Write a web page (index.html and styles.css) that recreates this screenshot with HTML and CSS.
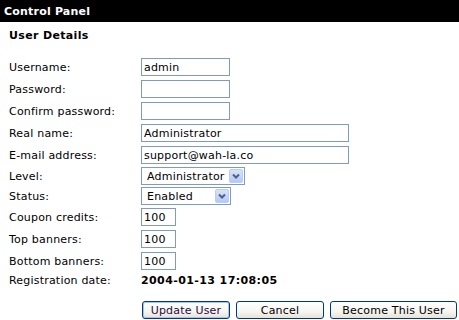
FILE: index.html
```html
<!DOCTYPE html>
<html lang="en">
<head>
  <meta charset="UTF-8" />
  <title>Control Panel | User Details</title>
  <link rel="stylesheet" href="styles.css">
</head>
<body>
  <div class="panel-title">Control Panel</div>

  <div class="panel">
    <h3 class="section-title">User Details</h3>

    <form class="user-form">
      <div class="fields">
        <label for="username">Username:</label>
        <input type="text" id="username" class="w-md" value="admin" />

        <label for="password">Password:</label>
        <input type="password" id="password" class="w-md" />

        <label for="confirm">Confirm password:</label>
        <input type="password" id="confirm" class="w-md" />

        <label for="realname">Real name:</label>
        <input type="text" id="realname" class="w-lg" value="Administrator" />

        <label for="email">E-mail address:</label>
        <input type="text" id="email" class="w-lg" value="support@wah-la.co" />

        <label for="level">Level:</label>
        <span class="select level">
          <select id="level">
            <option>Administrator</option>
            <option>Moderator</option>
            <option>User</option>
          </select>
          <svg class="drop" width="14" height="14" viewBox="0 0 14 14">
            <defs>
              <linearGradient id="dropFill" x1="0" y1="0" x2="0" y2="1">
                <stop offset="0" stop-color="#d8e4fc" />
                <stop offset="1" stop-color="#b3c8f5" />
              </linearGradient>
            </defs>
            <rect x="0.5" y="0.5" width="13" height="13" rx="1.5" fill="url(#dropFill)" stroke="#bccdf4" />
            <path d="M4 5.5 L7 8.5 L10 5.5" fill="none" stroke="#4d6185" stroke-width="2" />
          </svg>
        </span>

        <label for="status">Status:</label>
        <span class="select status">
          <select id="status">
            <option>Enabled</option>
            <option>Disabled</option>
          </select>
          <svg class="drop" width="14" height="14" viewBox="0 0 14 14">
            <rect x="0.5" y="0.5" width="13" height="13" rx="1.5" fill="url(#dropFill)" stroke="#bccdf4" />
            <path d="M4 5.5 L7 8.5 L10 5.5" fill="none" stroke="#4d6185" stroke-width="2" />
          </svg>
        </span>

        <label for="coupons">Coupon credits:</label>
        <input type="text" id="coupons" class="w-sm" value="100" />

        <label for="topbanners">Top banners:</label>
        <input type="text" id="topbanners" class="w-sm" value="100" />

        <label for="bottombanners">Bottom banners:</label>
        <input type="text" id="bottombanners" class="w-sm" value="100" />

        <span class="label">Registration date:</span>
        <span class="reg-date">2004-01-13 17:08:05</span>
      </div>

      <div class="actions">
        <button type="submit" class="btn default">Update User</button>
        <button type="button" class="btn btn-cancel">Cancel</button>
        <button type="button" class="btn btn-become">Become This User</button>
      </div>
    </form>
  </div>
</body>
</html>
```

FILE: styles.css
```css
body {
  font-family: 'DejaVu Sans', Verdana, sans-serif;
  font-size: 11px;
  letter-spacing: 0.2px;
  color: #000;
  background-color: #fff;
  margin: 0;
  padding: 0;
}

.panel-title {
  background-color: #000;
  color: #fff;
  font-weight: bold;
  letter-spacing: 0.2px;
  height: 22px;
  box-sizing: border-box;
  padding: 2px 0 0 4px;
  line-height: 20px;
}

.panel {
  padding: 0 0 0 9px;
}

.section-title {
  margin: 0;
  padding-top: 7px;
  font-size: 11px;
  line-height: 14px;
  font-weight: bold;
  letter-spacing: 0.35px;
}

.fields {
  margin-top: 13px;
  display: grid;
  grid-template-columns: 132px auto;
  grid-template-rows: repeat(5, 22px) 20px 20px repeat(3, 22px) 16px;
  align-items: center;
  justify-items: start;
}

label, .label {
  line-height: 13px;
}

input {
  box-sizing: border-box;
  height: 18px;
  padding: 0 2px;
  border: 1px solid #7f9db9;
  font-family: inherit;
  font-size: 11px;
  letter-spacing: 0.2px;
  color: #000;
  margin: 0;
}

.w-sm { width: 35px; }
.w-md { width: 89px; }
.w-lg { width: 208px; }

.select {
  position: relative;
  display: block;
}

.select select {
  appearance: none;
  box-sizing: border-box;
  height: 18px;
  margin: 0;
  padding: 0 0 0 5px;
  border: 1px solid #7f9db9;
  border-radius: 0;
  background: #fff;
  font-family: inherit;
  font-size: 11px;
  letter-spacing: 0.2px;
  color: #000;
}

.level select { width: 104px; }
.status select { width: 90px; }

.select .drop {
  position: absolute;
  top: 2px;
  right: 2px;
  pointer-events: none;
}

.reg-date {
  font-weight: bold;
  line-height: 13px;
  letter-spacing: 0.4px;
}

.actions {
  display: flex;
  gap: 6px;
  margin-top: 13px;
  padding-left: 133px;
}

.btn {
  box-sizing: border-box;
  height: 18px;
  width: 88px;
  padding: 0;
  border: 1px solid #003c74;
  border-radius: 3px;
  background: linear-gradient(to bottom, #ffffff 0%, #f6f5f0 60%, #e6e3d6 100%);
  font-family: inherit;
  font-size: 11px;
  letter-spacing: 0.2px;
  color: #000;
  cursor: pointer;
}

.btn.default {
  color: #2a0b3f;
  box-shadow: inset 0 0 0 1px #a9c2f0;
}

.btn-become {
  width: 127px;
}
```
